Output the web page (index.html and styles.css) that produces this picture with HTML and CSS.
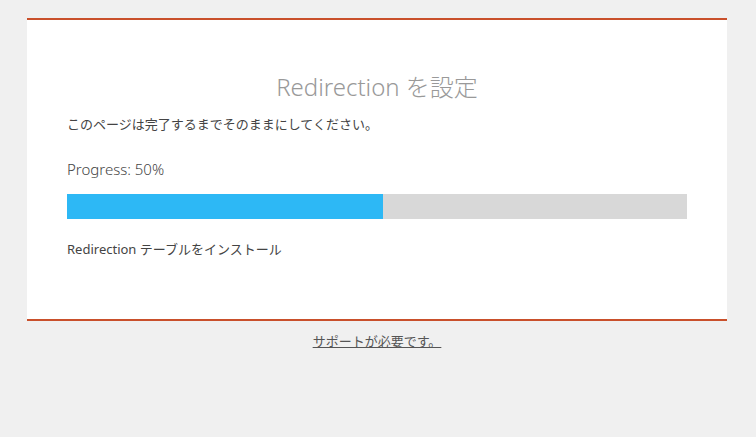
FILE: index.html
```html
<!DOCTYPE html>
<html lang="ja">
<head>
<meta charset="utf-8">
<link rel="stylesheet" href="styles.css">
</head>
<body>
<div class="wrap">
  <div class="card">
    <h1 class="title">Redirection を設定</h1>
    <p class="note">このページは完了するまでそのままにしてください。</p>
    <p class="progress-label">Progress: 50%</p>
    <div class="bar"><div class="bar-fill" style="width:316px"></div></div>
    <p class="step">Redirection テーブルをインストール</p>
  </div>
  <div class="footer"><a class="help" href="#">サポートが必要です。</a></div>
</div>
</body>
</html>
```
FILE: styles.css
```css
html, body {
  margin: 0;
  padding: 0;
  background: #f0f0f0;
  font-family: "Noto Sans", "Noto Sans CJK JP", sans-serif;
  color: #444;
}
.wrap {
  padding-top: 18px;
  padding-left: 27px;
  width: 700px;
}
.card {
  background: #fff;
  border-top: 2px solid #c9502b;
  border-bottom: 2px solid #c9502b;
  padding: 51px 40px 0 40px;
  height: 248px;
}
.title {
  margin: 0;
  text-align: center;
  font-size: 24px;
  font-weight: 300;
  color: #999;
  line-height: 32px;
}
.note {
  margin: 12px 0 0 0;
  font-size: 13px;
  line-height: 18px;
}
.progress-label {
  margin: 27px 0 0 0;
  font-size: 15px;
  font-weight: 300;
  line-height: 18px;
}
.bar {
  margin-top: 16px;
  height: 25px;
  width: 620px;
  background: #d8d8d8;
}
.bar-fill {
  height: 100%;
  background: #2db8f5;
}
.step {
  margin: 21px 0 0 0;
  font-size: 13px;
  line-height: 18px;
}
.footer {
  text-align: center;
  padding-top: 10px;
  font-size: 13px;
  line-height: 20px;
}
.help {
  color: #555;
  text-decoration: underline;
}
```
